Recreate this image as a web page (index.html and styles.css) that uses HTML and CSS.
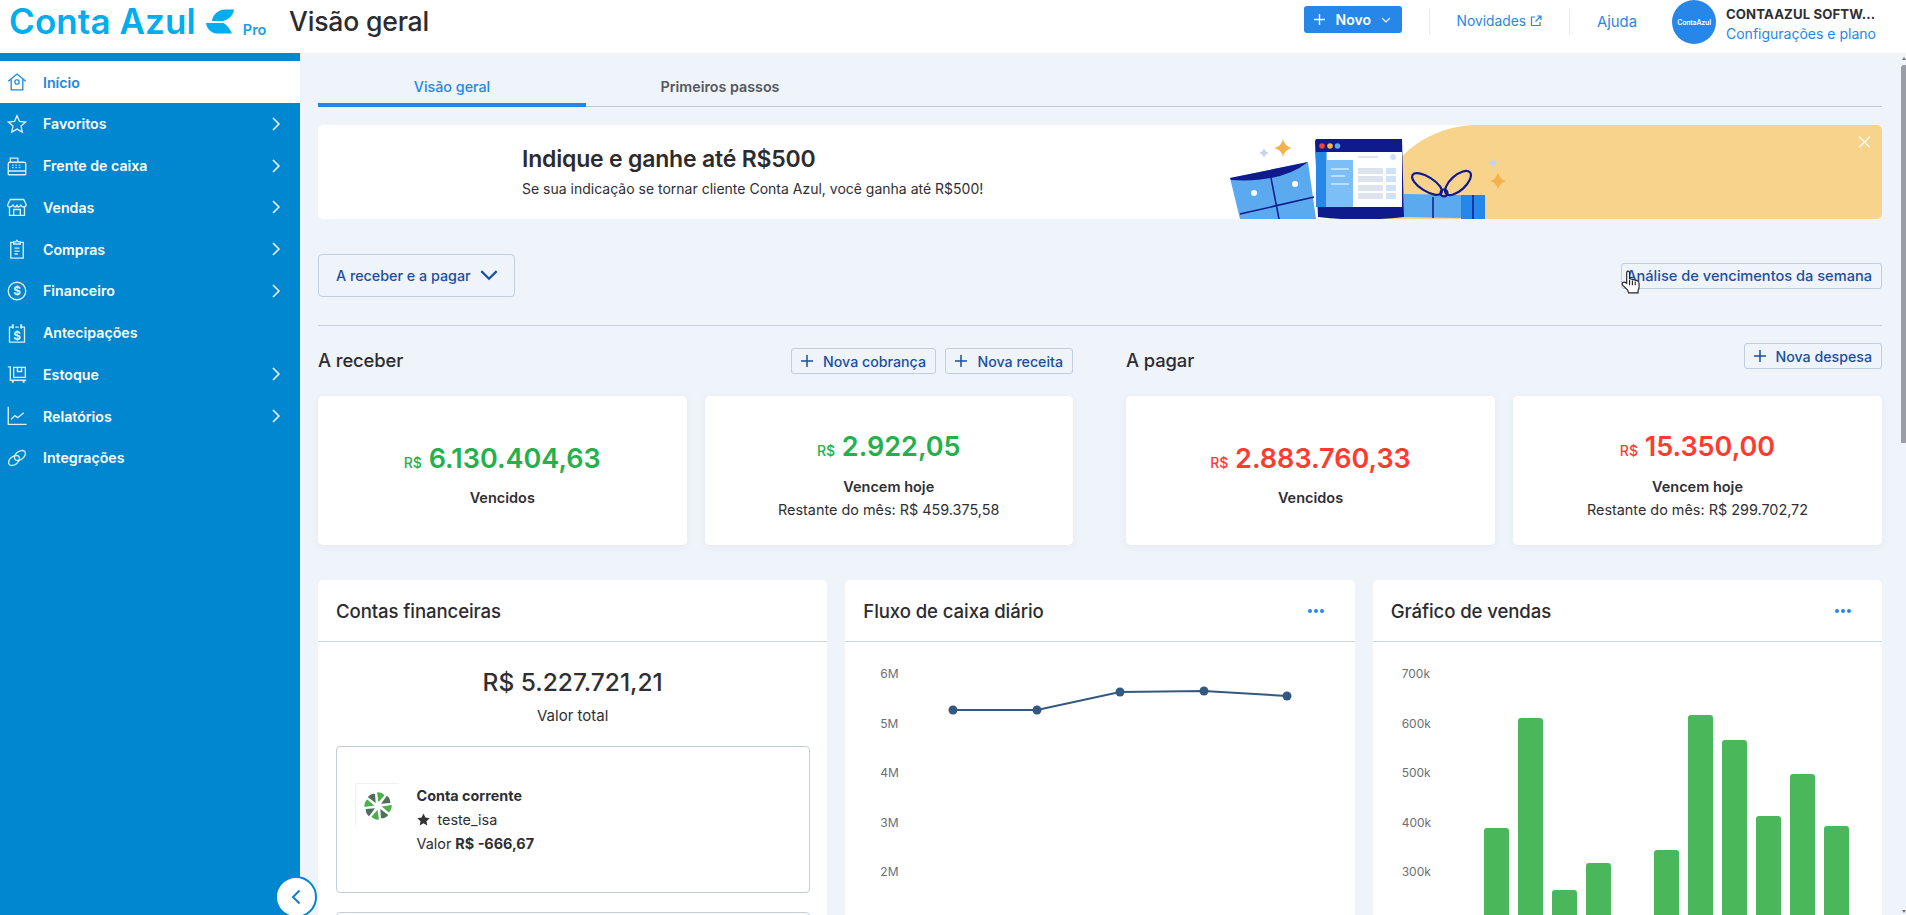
FILE: index.html
```html
<!DOCTYPE html>
<html lang="pt-BR">
<head>
<meta charset="utf-8">
<title>Conta Azul - Visão geral</title>
<link rel="stylesheet" href="styles.css">
</head>
<body>
<header class="topbar">
  <div class="logo">
    <span class="logo-text">Conta Azul</span>
    <svg class="logo-leaf" viewBox="0 0 30 26"><path d="M6 12C7 5 13 0 20 0H29C28 7 22 12 15 12Z"/><path d="M0 14H18C22 16 25 21 27 25H13C6 25 1 21 0 14Z"/></svg>
    <span class="logo-pro">Pro</span>
  </div>
  <h1 class="page-title">Visão geral</h1>
  <div class="top-actions">
    <button class="btn-new"><svg class="ic-plus" viewBox="0 0 12 12"><path d="M6 0v12M0 6h12"/></svg><span>Novo</span><svg class="ic-caret" viewBox="0 0 10 6"><path d="M1 1l4 4 4-4"/></svg></button>
    <span class="top-sep"></span>
    <a class="top-link link-news">Novidades <svg class="ic-ext" viewBox="0 0 12 12"><path d="M5 2H1.500v8.500h8.500V7M7 1h4v4M11 1L5.500 6.500"/></svg></a>
    <span class="top-sep"></span>
    <a class="top-link link-help">Ajuda</a>
    <div class="avatar">ContaAzul</div>
    <div class="account">
      <strong>CONTAAZUL SOFTW...</strong>
      <a>Configurações e plano</a>
    </div>
  </div>
</header>

<div class="shell">
  <nav class="sidebar">
    <a class="nav-item active">
      <svg class="nav-ic" viewBox="0 0 24 24"><path d="M1.500 11L12 2.500 22.500 11M5 9v12.500h14V9"/><rect x="9.500" y="9.500" width="5" height="5" rx="2"/></svg>
      <span>Início</span>
    </a>
    <a class="nav-item">
      <svg class="nav-ic" viewBox="0 0 24 24"><path d="M12 2l3 6.800 7.300.8-5.500 4.900 1.600 7.300L12 18.100l-6.400 3.700 1.600-7.300L1.700 9.600 9 8.800z"/></svg>
      <span>Favoritos</span>
      <svg class="nav-arrow" viewBox="0 0 8 14"><path d="M1 1l6 6-6 6"/></svg>
    </a>
    <a class="nav-item">
      <svg class="nav-ic" viewBox="0 0 24 24"><path d="M4 7V2.500h9V7M1.500 18V9.500q0-2 2-2h17q2 0 2 2V18M1.500 18h21v3.500q0 1-1 1h-19q-1 0-1-1z"/><path class="thin" d="M6 11h2m2 0h2m2 0h2m-10 3h2m2 0h2m2 0h2"/></svg>
      <span>Frente de caixa</span>
      <svg class="nav-arrow" viewBox="0 0 8 14"><path d="M1 1l6 6-6 6"/></svg>
    </a>
    <a class="nav-item">
      <svg class="nav-ic" viewBox="0 0 24 24"><path d="M4 3h16l3 6q0 3-3 3-3 0-3.500-3Q16 12 14 12t-2-3q0 3-2 3T7 9q-.5 3-3.500 3T1 9zM3 12v10h18V12M8 22v-7h8v7"/></svg>
      <span>Vendas</span>
      <svg class="nav-arrow" viewBox="0 0 8 14"><path d="M1 1l6 6-6 6"/></svg>
    </a>
    <a class="nav-item">
      <svg class="nav-ic" viewBox="0 0 24 24"><path d="M8 4H4.500v19h15V4H16M8 6V3.500h2.500L12 1.500l1.500 2H16V6z"/><path d="M9 11h6M9 14.500h6M9 18h4"/></svg>
      <span>Compras</span>
      <svg class="nav-arrow" viewBox="0 0 8 14"><path d="M1 1l6 6-6 6"/></svg>
    </a>
    <a class="nav-item">
      <svg class="nav-ic" viewBox="0 0 24 24"><circle cx="12" cy="12" r="10.500"/><text class="ic-dollar" x="12" y="17">$</text></svg>
      <span>Financeiro</span>
      <svg class="nav-arrow" viewBox="0 0 8 14"><path d="M1 1l6 6-6 6"/></svg>
    </a>
    <a class="nav-item">
      <svg class="nav-ic" viewBox="0 0 24 24"><path d="M7 5H3v18h18V5h-4M10 5h4"/><path class="thick" d="M7 1.500v5M17 1.500v5"/><text class="ic-dollar" x="12" y="20">$</text></svg>
      <span>Antecipações</span>
    </a>
    <a class="nav-item">
      <svg class="nav-ic" viewBox="0 0 24 24"><path d="M1 3.500h3V19.500h19M8 4h14v12H8zM12.500 4v5h5V4"/><path class="thick" d="M7 20v2.500M20 20v2.500"/></svg>
      <span>Estoque</span>
      <svg class="nav-arrow" viewBox="0 0 8 14"><path d="M1 1l6 6-6 6"/></svg>
    </a>
    <a class="nav-item">
      <svg class="nav-ic" viewBox="0 0 24 24"><path d="M1.500 1v21h22M5 16l4.500-4.500 3.500 2.500 7-6"/></svg>
      <span>Relatórios</span>
      <svg class="nav-arrow" viewBox="0 0 8 14"><path d="M1 1l6 6-6 6"/></svg>
    </a>
    <a class="nav-item">
      <svg class="nav-ic" viewBox="0 0 24 24"><ellipse cx="8.500" cy="15" rx="7.500" ry="4.800" transform="rotate(-38 8.500 15)"/><ellipse cx="15.500" cy="9" rx="7.500" ry="4.800" transform="rotate(-38 15.500 9)"/></svg>
      <span>Integrações</span>
    </a>
  </nav>

  <main class="content">
    <div class="tabs">
      <a class="tab tab-on">Visão geral</a>
      <a class="tab">Primeiros passos</a>
    </div>

    <section class="banner">
      <svg class="banner-art" viewBox="1200 125 682 94" aria-hidden="true">
        <path fill="#F7D38B" d="M1473 125C1440 127 1412 142 1395 165 1385 180 1378 200 1370 219H1882V125Z"/>
        <path fill="#F4B24E" d="M1283 139Q1284.500 146.500 1292 148 1284.500 149.500 1283 157 1281.500 149.500 1274 148 1281.500 146.500 1283 139ZM1498 172Q1499.500 179.500 1506 181 1499.500 182.500 1498 190 1496.500 182.500 1490 181 1496.500 179.500 1498 172Z"/>
        <path fill="#C5D5EE" d="M1264 148Q1265 152 1269 153 1265 154 1264 158 1263 154 1259 153 1263 152 1264 148ZM1493 158Q1494 162 1498 163 1494 164 1493 168 1492 164 1488 163 1492 162 1493 158Z"/>
        <path fill="#5BAAF0" d="M1230 178L1308 162 1316 219H1240Z"/>
        <path fill="#0F1A8C" d="M1230 178L1308 162Q1282 183 1231 180Z"/>
        <path fill="none" stroke="#0F1A8C" stroke-width="1.500" d="M1271 178L1279 219M1240 214L1314 197"/>
        <circle fill="#fff" cx="1254" cy="193" r="3"/><circle fill="#fff" cx="1295" cy="184" r="3"/>
        <path fill="#0F1A8C" d="M1317 139H1402L1404 217Q1360 222 1318 217L1315 142Q1315 139 1317 139Z"/>
        <rect fill="#fff" x="1316" y="152" width="86" height="55"/>
        <rect fill="#2687E9" x="1316" y="152" width="10" height="55"/>
        <rect fill="#7CBFF7" x="1326" y="152" width="27" height="55"/>
        <rect fill="#fff" x="1327" y="152" width="26" height="8"/>
        <path stroke="#fff" stroke-width="1" d="M1331 169H1349M1331 176H1345M1331 184H1349"/>
        <path stroke="#C7CFDA" stroke-width="1" d="M1358 157H1378"/>
        <circle fill="#CFE2F7" cx="1393" cy="157" r="3"/>
        <path fill="#DCE3EC" d="M1358 168h25v6h-25zM1358 176h25v6h-25zM1358 185h25v6h-25zM1358 193h25v6h-25z"/>
        <path fill="#CFE2F7" d="M1386 168h10v6h-10zM1386 176h10v6h-10zM1386 185h10v6h-10zM1386 193h10v6h-10z"/>
        <circle fill="#F0432D" cx="1322" cy="146" r="2.800"/><circle fill="#F7B344" cx="1330" cy="146" r="2.800"/><circle fill="#5BAAF0" cx="1337.500" cy="146" r="2.800"/>
        <path fill="#5BAAF0" d="M1404 194L1461 195V218L1404 217Z"/>
        <rect fill="#2687E9" x="1461" y="195" width="24" height="24"/>
        <path fill="none" stroke="#0F1A8C" stroke-width="1.500" d="M1433 197V218M1473 195V219"/>
        <g fill="none" stroke="#0F1A8C" stroke-width="2.200"><ellipse cx="1427" cy="184" rx="17" ry="7" transform="rotate(32 1427 184)"/><ellipse cx="1458" cy="183" rx="16" ry="7.500" transform="rotate(-42 1458 183)"/><circle cx="1444" cy="193" r="3.500"/></g>
        <path fill="none" stroke="#fff" stroke-width="1.300" d="M1859 136.500L1870 147.500M1870 136.500L1859 147.500"/>
      </svg>
      <div class="banner-text">
        <h2>Indique e ganhe até R$500</h2>
        <p>Se sua indicação se tornar cliente Conta Azul, você ganha até R$500!</p>
      </div>
    </section>

    <div class="filter-row">
      <button class="filter">A receber e a pagar<svg viewBox="0 0 16 10"><path d="M1 1l7 7 7-7"/></svg></button>
      <button class="btn-outline btn-week">Análise de vencimentos da semana</button>
    </div>

    <div class="columns">
      <section class="col">
        <div class="col-head">
          <h3>A receber</h3>
          <div class="col-btns">
            <button class="btn-outline"><svg class="ic-plus" viewBox="0 0 12 12"><path d="M6 0v12M0 6h12"/></svg>Nova cobrança</button>
            <button class="btn-outline"><svg class="ic-plus" viewBox="0 0 12 12"><path d="M6 0v12M0 6h12"/></svg>Nova receita</button>
          </div>
        </div>
        <div class="stats">
          <article class="stat"><div class="num green"><small>R$</small> 6.130.404,63</div><div class="lbl">Vencidos</div></article>
          <article class="stat"><div class="num green"><small>R$</small> 2.922,05</div><div class="lbl">Vencem hoje</div><div class="rest">Restante do mês: R$ 459.375,58</div></article>
        </div>
      </section>
      <section class="col col-pay">
        <div class="col-head">
          <h3>A pagar</h3>
          <div class="col-btns">
            <button class="btn-outline"><svg class="ic-plus" viewBox="0 0 12 12"><path d="M6 0v12M0 6h12"/></svg>Nova despesa</button>
          </div>
        </div>
        <div class="stats">
          <article class="stat"><div class="num red"><small>R$</small> 2.883.760,33</div><div class="lbl">Vencidos</div></article>
          <article class="stat"><div class="num red"><small>R$</small> 15.350,00</div><div class="lbl">Vencem hoje</div><div class="rest">Restante do mês: R$ 299.702,72</div></article>
        </div>
      </section>
    </div>

    <div class="panels">
      <section class="panel">
        <div class="panel-head"><h3>Contas financeiras</h3></div>
        <div class="accounts">
          <div class="total">R$ 5.227.721,21</div>
          <div class="total-lbl">Valor total</div>
          <div class="acc-card">
            <div class="acc-logo">
              <svg viewBox="0 0 32 32">
                <path class="blade-a" d="M16.500 12L15 1.500Q20 1 23 4.500Z"/>
                <path class="blade-b" transform="rotate(45 16 16)" d="M16.500 12L15 1.500Q20 1 23 4.500Z"/>
                <path class="blade-a" transform="rotate(90 16 16)" d="M16.500 12L15 1.500Q20 1 23 4.500Z"/>
                <path class="blade-b" transform="rotate(135 16 16)" d="M16.500 12L15 1.500Q20 1 23 4.500Z"/>
                <path class="blade-a" transform="rotate(180 16 16)" d="M16.500 12L15 1.500Q20 1 23 4.500Z"/>
                <path class="blade-b" transform="rotate(225 16 16)" d="M16.500 12L15 1.500Q20 1 23 4.500Z"/>
                <path class="blade-a" transform="rotate(270 16 16)" d="M16.500 12L15 1.500Q20 1 23 4.500Z"/>
                <path class="blade-b" transform="rotate(315 16 16)" d="M16.500 12L15 1.500Q20 1 23 4.500Z"/>
              </svg>
            </div>
            <div class="acc-info">
              <strong>Conta corrente</strong>
              <div class="acc-name"><svg viewBox="0 0 24 24"><path d="M12 1l3.500 7.500 8 1-6 5.500 1.600 8.200L12 19l-7.100 4.200L6.500 15l-6-5.500 8-1z"/></svg>teste_isa</div>
              <div>Valor <b>R$ -666,67</b></div>
            </div>
          </div>
          <div class="acc-card"></div>
        </div>
      </section>

      <section class="panel">
        <div class="panel-head"><h3>Fluxo de caixa diário</h3><span class="dots"><i></i><i></i><i></i></span></div>
        <div class="chart chart-line">
          <div class="axis"><span>6M</span><span>5M</span><span>4M</span><span>3M</span><span>2M</span></div>
          <svg class="line-svg" viewBox="0 0 360 371">
            <polyline fill="none" stroke="#34587F" stroke-width="2" points="13,61 97,61 180,43 264,42 347,47"/>
            <g fill="#34587F"><circle cx="13" cy="61" r="4.500"/><circle cx="97" cy="61" r="4.500"/><circle cx="180" cy="43" r="4.500"/><circle cx="264" cy="42" r="4.500"/><circle cx="347" cy="47" r="4.500"/></g>
          </svg>
        </div>
      </section>

      <section class="panel">
        <div class="panel-head"><h3>Gráfico de vendas</h3><span class="dots"><i></i><i></i><i></i></span></div>
        <div class="chart chart-bars">
          <div class="axis"><span>700k</span><span>600k</span><span>500k</span><span>400k</span><span>300k</span></div>
          <div class="bars">
            <i style="height:192px"></i><i style="height:302px"></i><i style="height:130px"></i><i style="height:157px"></i><i style="height:0"></i><i style="height:170px"></i><i style="height:305px"></i><i style="height:280px"></i><i style="height:204px"></i><i style="height:246px"></i><i style="height:194px"></i>
          </div>
        </div>
      </section>
    </div>

    <svg class="cursor" viewBox="0 0 20 25"><path d="M6 14V3q0-2 1.500-2T9 3v6l8 2q2 .5 2 3v4q0 2-1 3v3H8l-1-3-5-5q-1.500-2 0-3 1.500-1 4 1z"/><path d="M9 10v6M12 11v5M15 12v4"/></svg>
    <span class="scroll-up"></span>
    <span class="scroll-thumb"></span>
    <span class="scroll-down"></span>
  </main>

  <button class="collapse"><svg viewBox="0 0 10 16"><path d="M8.500 1.500L2 8l6.500 6.500"/></svg></button>
</div>
</body>
</html>
```
FILE: styles.css
```css
* { box-sizing: border-box; }
html, body { margin: 0; height: 100%; overflow: hidden; }
body { font-family: Inter, "Noto Sans", sans-serif; color: #2f2f33; background: #fff; font-size: 14px; }
h1, h2, h3, p { margin: 0; }
button { font-family: inherit; cursor: pointer; }
a { color: inherit; text-decoration: none; }

.topbar { height: 53px; display: flex; align-items: flex-start; background: #fff; }
.logo { width: 289px; height: 53px; display: flex; align-items: flex-start; padding-left: 9px; flex: none; }
.logo-text { font-size: 35px; font-weight: 600; line-height: 43px; color: #00AEEF; letter-spacing: .1px; white-space: nowrap; }
.logo-leaf { width: 29px; height: 26px; margin: 9px 0 0 10px; fill: #00AEEF; flex: none; }
.logo-pro { font-size: 14.5px; font-weight: 600; color: #1E9BE8; margin: 21px 0 0 8px; line-height: 18px; }
.page-title { font-size: 26.6px; font-weight: 500; line-height: 42px; color: #2c2c30; letter-spacing: -.2px; }
.top-actions { margin-left: auto; display: flex; align-items: flex-start; height: 53px; padding-right: 26px; }
.btn-new { width: 98px; height: 27px; margin-top: 6px; background: #2687E9; border: 0; border-radius: 3px; color: #fff; font-size: 14px; font-weight: 600; display: flex; align-items: center; padding: 0 0 0 10px; }
.btn-new .ic-plus { stroke: #fff; margin-right: 11px; width: 11px; height: 11px; }
.ic-plus { width: 12px; height: 12px; fill: none; stroke: #1B4FA0; stroke-width: 1.5; flex: none; }
.ic-caret { width: 10px; height: 6px; fill: none; stroke: #fff; stroke-width: 1.2; margin-left: 10px; }
.top-sep { width: 1px; height: 26px; background: #E6EBF3; margin-top: 9px; }
.btn-new + .top-sep { margin-left: 27px; }
.top-link { color: #2687E9; font-size: 13.8px; line-height: 18px; display: flex; align-items: center; }
.link-news { margin: 12px 27px 0 27px; gap: 4px; }
.ic-ext { width: 12px; height: 12px; fill: none; stroke: #2687E9; stroke-width: 1.2; }
.link-help { margin: 13px 35px 0 27px; font-size: 14.8px; }
.avatar { width: 44px; height: 44px; border-radius: 50%; background: #2687E9; color: #fff; font-size: 7px; font-weight: 600; display: flex; align-items: center; justify-content: center; white-space: nowrap; flex: none; letter-spacing: -.2px; }
.account { margin-left: 10px; width: 154px; display: flex; flex-direction: column; white-space: nowrap; }
.account strong { font-size: 13.2px; font-weight: 700; line-height: 18px; margin-top: 5px; letter-spacing: .1px; color: #2f2f33; }
.account a { font-size: 14px; color: #2687E9; line-height: 18px; margin-top: 2px; }

.shell { position: relative; display: flex; height: 862px; }
.sidebar { width: 300px; flex: none; background: #0087CF; padding-top: 8px; }
.nav-item { height: 41.75px; display: flex; align-items: center; padding-left: 7px; color: #fff; font-size: 14.2px; font-weight: 600; }
.nav-item.active { background: #fff; color: #1E88D8; height: 42px; }
.nav-ic { width: 20px; height: 20px; margin-right: 16px; fill: none; stroke: #DCEEFA; stroke-width: 1.6; flex: none; }
.active .nav-ic { stroke: #1E88D8; }
.nav-ic .thin { stroke-width: 1.2; }
.nav-ic .thick { stroke-width: 2.4; }
.ic-dollar { font-size: 14px; font-weight: 700; text-anchor: middle; fill: #DCEEFA; stroke: none; }
.nav-arrow { width: 8px; height: 14px; margin-left: auto; margin-right: 20px; fill: none; stroke: #fff; stroke-width: 1.5; }

.content { position: relative; flex: 1; min-width: 0; background: #EFF3FA; padding: 0 24px 0 18px; overflow: hidden; }
.tabs { display: flex; height: 54px; border-bottom: 1px solid #C4C8CE; }
.tab { width: 268px; height: 54px; padding-top: 25px; text-align: center; font-size: 14.3px; font-weight: 600; line-height: 18px; color: #55585E; }
.tab-on { color: #2687E9; font-weight: 500; border-bottom: 4px solid #2687E9; }

.banner { position: relative; margin-top: 18px; height: 94px; background: #fff; border-radius: 5px; overflow: hidden; display: flex; padding-left: 204px; }
.banner-art { position: absolute; right: 0; top: 0; width: 682px; height: 94px; }
.banner-text { position: relative; padding-top: 20px; }
.banner-text h2 { font-size: 23px; font-weight: 600; line-height: 28px; color: #2c2c30; letter-spacing: -.2px; }
.banner-text p { font-size: 14px; line-height: 20px; margin-top: 6px; color: #2f2f33; }

.filter-row { display: flex; align-items: center; justify-content: space-between; margin-top: 35px; height: 43px; }
.filter { width: 197px; height: 43px; border: 1px solid #C3CEDD; border-radius: 4px; background: #EFF3FA; color: #1B4FA0; font-size: 14.3px; font-weight: 500; display: flex; align-items: center; padding: 0 0 0 17px; white-space: nowrap; }
.filter svg { width: 18px; height: 11px; margin-left: 9px; fill: none; stroke: #1B4FA0; stroke-width: 2; flex: none; }
.btn-outline { height: 26px; border: 1px solid #C3CEDD; border-radius: 3px; background: #EFF3FA; color: #1B4FA0; font-size: 14.2px; font-weight: 500; display: flex; align-items: center; gap: 10px; padding: 0 9px; white-space: nowrap; }
.btn-week { width: 261px; justify-content: flex-end; font-size: 14.6px; }

.columns { display: grid; grid-template-columns: 755px 756px; gap: 53px; margin-top: 28px; border-top: 1px solid #C9D0DE; }
.col-head { height: 70px; display: flex; justify-content: space-between; align-items: flex-start; padding-top: 22px; }
.col-pay .col-head { padding-top: 17px; }
.col-head h3 { font-size: 18.4px; font-weight: 500; line-height: 24px; color: #2c2c30; letter-spacing: -.1px; }
.col-pay .col-head h3 { margin-top: 5px; }
.col-btns { display: flex; gap: 9.500px; }
.stats { display: grid; grid-template-columns: 1fr 1fr; gap: 18px; }
.stat { height: 149px; background: #fff; border-radius: 5px; box-shadow: 0 2px 8px rgba(60,80,120,.05); padding-top: 9px; display: flex; flex-direction: column; align-items: center; justify-content: center; }
.num { font-size: 27px; font-weight: 600; line-height: 34px; margin-bottom: 8.500px; }
.num small { font-size: 14px; font-weight: 500; }
.green { color: #22B14C; }
.red { color: #FF3B30; }
.lbl { font-size: 14.5px; font-weight: 600; line-height: 20px; }
.rest { font-size: 14.4px; line-height: 20px; margin-top: 3px; }

.panels { display: grid; grid-template-columns: repeat(3, 1fr); gap: 18px; margin-top: 35px; }
.panel { background: #fff; border-radius: 5px 5px 0 0; height: 600px; }
.panel-head { height: 62px; border-bottom: 1px solid #C9D6E6; display: flex; align-items: center; justify-content: space-between; padding: 0 31px 0 18px; }
.panel-head h3 { font-size: 18.6px; font-weight: 500; color: #2c2c30; letter-spacing: -.1px; }
.dots { display: flex; gap: 2px; }
.dots i { width: 4px; height: 4px; border-radius: 50%; background: #2687E9; }

.accounts { padding: 0 17.500px; display: flex; flex-direction: column; }
.total { text-align: center; font-size: 24.5px; font-weight: 500; line-height: 32px; margin-top: 24px; }
.total-lbl { text-align: center; font-size: 15px; line-height: 20px; margin-top: 8px; }
.acc-card { height: 147px; border: 1px solid #C3CEDD; border-radius: 4px; margin-top: 20px; display: flex; align-items: center; padding-left: 18px; flex: none; }
.acc-card + .acc-card { margin-top: 19px; }
.acc-logo { width: 44px; height: 44px; border-top: 1px solid #F0F0F0; border-left: 1px solid #F0F0F0; padding: 6px 6px 6px 7px; align-self: flex-start; margin-top: 36px; flex: none; }
.acc-logo svg { width: 30px; height: 32px; display: block; }
.blade-a { fill: #4FAE4C; }
.blade-b { fill: #4F6F5B; }
.acc-info { margin-left: 18px; font-size: 14.4px; line-height: 24px; display: flex; flex-direction: column; }
.acc-info strong { font-weight: 700; font-size: 14.4px; }
.acc-info b { font-weight: 700; }
.acc-name { display: flex; align-items: center; gap: 8px; }
.acc-name svg { width: 13px; height: 13px; fill: #333; }

.chart { display: flex; padding-top: 7px; }
.axis { display: flex; flex-direction: column; font-size: 12px; color: #6b6f76; flex: none; }
.axis span { height: 49.500px; line-height: 49.500px; flex: none; }
.chart-line { padding-left: 35px; }
.chart-line .axis { width: 60px; }
.line-svg { width: 360px; height: 371px; flex: none; }
.chart-bars { padding-left: 29px; }
.chart-bars .axis { width: 82px; }
.bars { display: flex; align-items: flex-end; gap: 8.500px; height: 371px; }
.bars i { width: 25.500px; background: #4BB75B; border-radius: 3px 3px 0 0; }

.cursor { position: absolute; left: 1321px; top: 217px; width: 19px; height: 24px; fill: #fff; stroke: #222; stroke-width: 1.2; }
.scroll-thumb { position: absolute; right: 0; top: 12px; width: 5px; height: 378px; background: #9A9DA3; border-radius: 3px 0 0 0; }
.scroll-up { position: absolute; right: 0; top: 4px; width: 0; height: 0; border-left: 2.500px solid transparent; border-right: 2.500px solid transparent; border-bottom: 3px solid #777; }
.scroll-down { position: absolute; right: 0; bottom: 2px; width: 0; height: 0; border-left: 2.500px solid transparent; border-right: 2.500px solid transparent; border-top: 3px solid #777; }

.collapse { position: absolute; left: 275px; top: 823px; width: 42px; height: 42px; border-radius: 50%; background: #fff; border: 2px solid #0087CF; display: flex; align-items: center; justify-content: center; padding: 0; }
.collapse svg { width: 10px; height: 16px; fill: none; stroke: #0E7FCC; stroke-width: 2; }
```
